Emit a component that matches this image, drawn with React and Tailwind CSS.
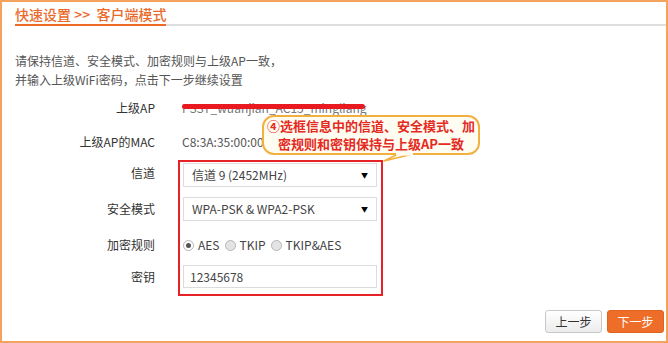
import React from 'react';

const font = { fontFamily: '"Noto Sans CJK SC", "Liberation Sans", sans-serif' };

function Radio({ checked, label }) {
  return (
    <div className="flex items-center gap-[4px] mr-[5px]">
      <span className={"w-[11px] h-[11px] rounded-full border border-[#b5b5b5] flex items-center justify-center " + (checked ? "bg-white" : "bg-[#e4e4e4]")}>
        {checked && <span className="w-[5px] h-[5px] rounded-full bg-[#555]" />}
      </span>
      <span className="text-[12px] text-[#444]">{label}</span>
    </div>
  );
}

function FakeSelect({ value }) {
  return (
    <div className="h-[24px] w-[194px] border border-[#dcdcdc] bg-white flex items-center justify-between pl-[8px] pr-[8px] text-[12px] text-[#444]">
      <span>{value}</span>
      <span className="text-[7px] text-black">▼</span>
    </div>
  );
}

export default function App() {
  const labels = [
    { t: '信道', h: 'h-[26px]' },
    { t: '安全模式', h: 'h-[46px]' },
    { t: '加密规则', h: 'h-[26px]' },
    { t: '密钥', h: 'h-[38px]' },
  ];

  return (
    <div className="relative w-[668px] h-[343px] border-2 border-[#f3a35e] bg-white overflow-hidden" style={font}>
      {/* heading */}
      <div className="ml-[13px] pt-[2px] flex border-b-2 border-[#dedede]">
        <div className="text-[14px] leading-[20px] font-medium text-[#e96a2b] border-b-2 border-[#ee6a26] -mb-[2px]">
          快速设置 &gt;&gt;&nbsp; 客户端模式
        </div>
      </div>

      <div className="px-[13px] mt-[25px] text-[12px] leading-[19px] text-[#555]">
        <div>请保持信道、安全模式、加密规则与上级AP一致，</div>
        <div>并输入上级WiFi密码，点击下一步继续设置</div>
      </div>

      {/* form */}
      <div className="px-[13px] mt-[2px] text-[12px]">
        <div className="flex items-center h-[34px]">
          <div className="w-[140px] text-right text-[#333]">上级AP</div>
          <div className="ml-[27px] relative text-[#777]">
            PSST_wuanjian_AC15_mingliang
            <span className="absolute left-0 right-[2px] top-[5px] h-[5px] rounded-full bg-[#e8191f]" />
          </div>
        </div>
        <div className="flex items-center h-[33px]">
          <div className="w-[140px] text-right text-[#333]">上级AP的MAC</div>
          <div className="ml-[27px] text-[#555]">C8:3A:35:00:00</div>
        </div>

        <div className="flex mt-[2px]">
          <div className="w-[140px] flex flex-col text-[#333]">
            {labels.map((l) => (
              <div key={l.t} className={l.h + " flex items-center justify-end"}>{l.t}</div>
            ))}
          </div>
          <div className="ml-[23px] border-2 border-[#e62227] pt-[1px] pb-[4px] pl-[3px] pr-[4px] flex flex-col">
            <FakeSelect value="信道 9 (2452MHz)" />
            <div className="mt-[10px]">
              <FakeSelect value="WPA-PSK & WPA2-PSK" />
            </div>
            <div className="mt-[12px] h-[24px] flex items-center">
              <Radio checked label="AES" />
              <Radio label="TKIP" />
              <Radio label="TKIP&AES" />
            </div>
            <div className="mt-[8px] h-[23px] w-[194px] border border-[#dcdcdc] bg-white flex items-center pl-[6px] text-[12px] text-[#444]">
              12345678
            </div>
          </div>
        </div>
      </div>

      {/* buttons */}
      <div className="flex justify-end gap-[5px] pr-[2px] mt-[14px]">
        <button className="w-[57px] h-[23px] rounded-[3px] border border-[#c8c8c8] bg-gradient-to-b from-white to-[#ececec] text-[12px] text-[#333]">上一步</button>
        <button className="w-[57px] h-[23px] rounded-[3px] border border-[#e0641f] bg-[#ee6e29] text-[12px] text-white">下一步</button>
      </div>

      {/* callout annotation */}
      <div className="absolute left-[260px] top-[113px] w-[218px] h-[40px] rounded-[12px] border-2 border-[#f2b13f] bg-[#fffdf2] text-center text-[13px] leading-[18px] font-bold text-[#e52a1f]">
        <div>④选框信息中的信道、安全模式、加</div>
        <div>密规则和密钥保持与上级AP一致</div>
      </div>
      <svg className="absolute left-[376px] top-[149px]" width="40" height="14" viewBox="0 0 40 14">
        <path d="M19 3.5 L6 10 L33 3.5 Z" fill="#fffdf2" stroke="#f2b13f" strokeWidth="1.5" strokeLinejoin="round" />
        <rect x="18" y="2" width="17" height="2.6" fill="#fffdf2" />
      </svg>
    </div>
  );
}
